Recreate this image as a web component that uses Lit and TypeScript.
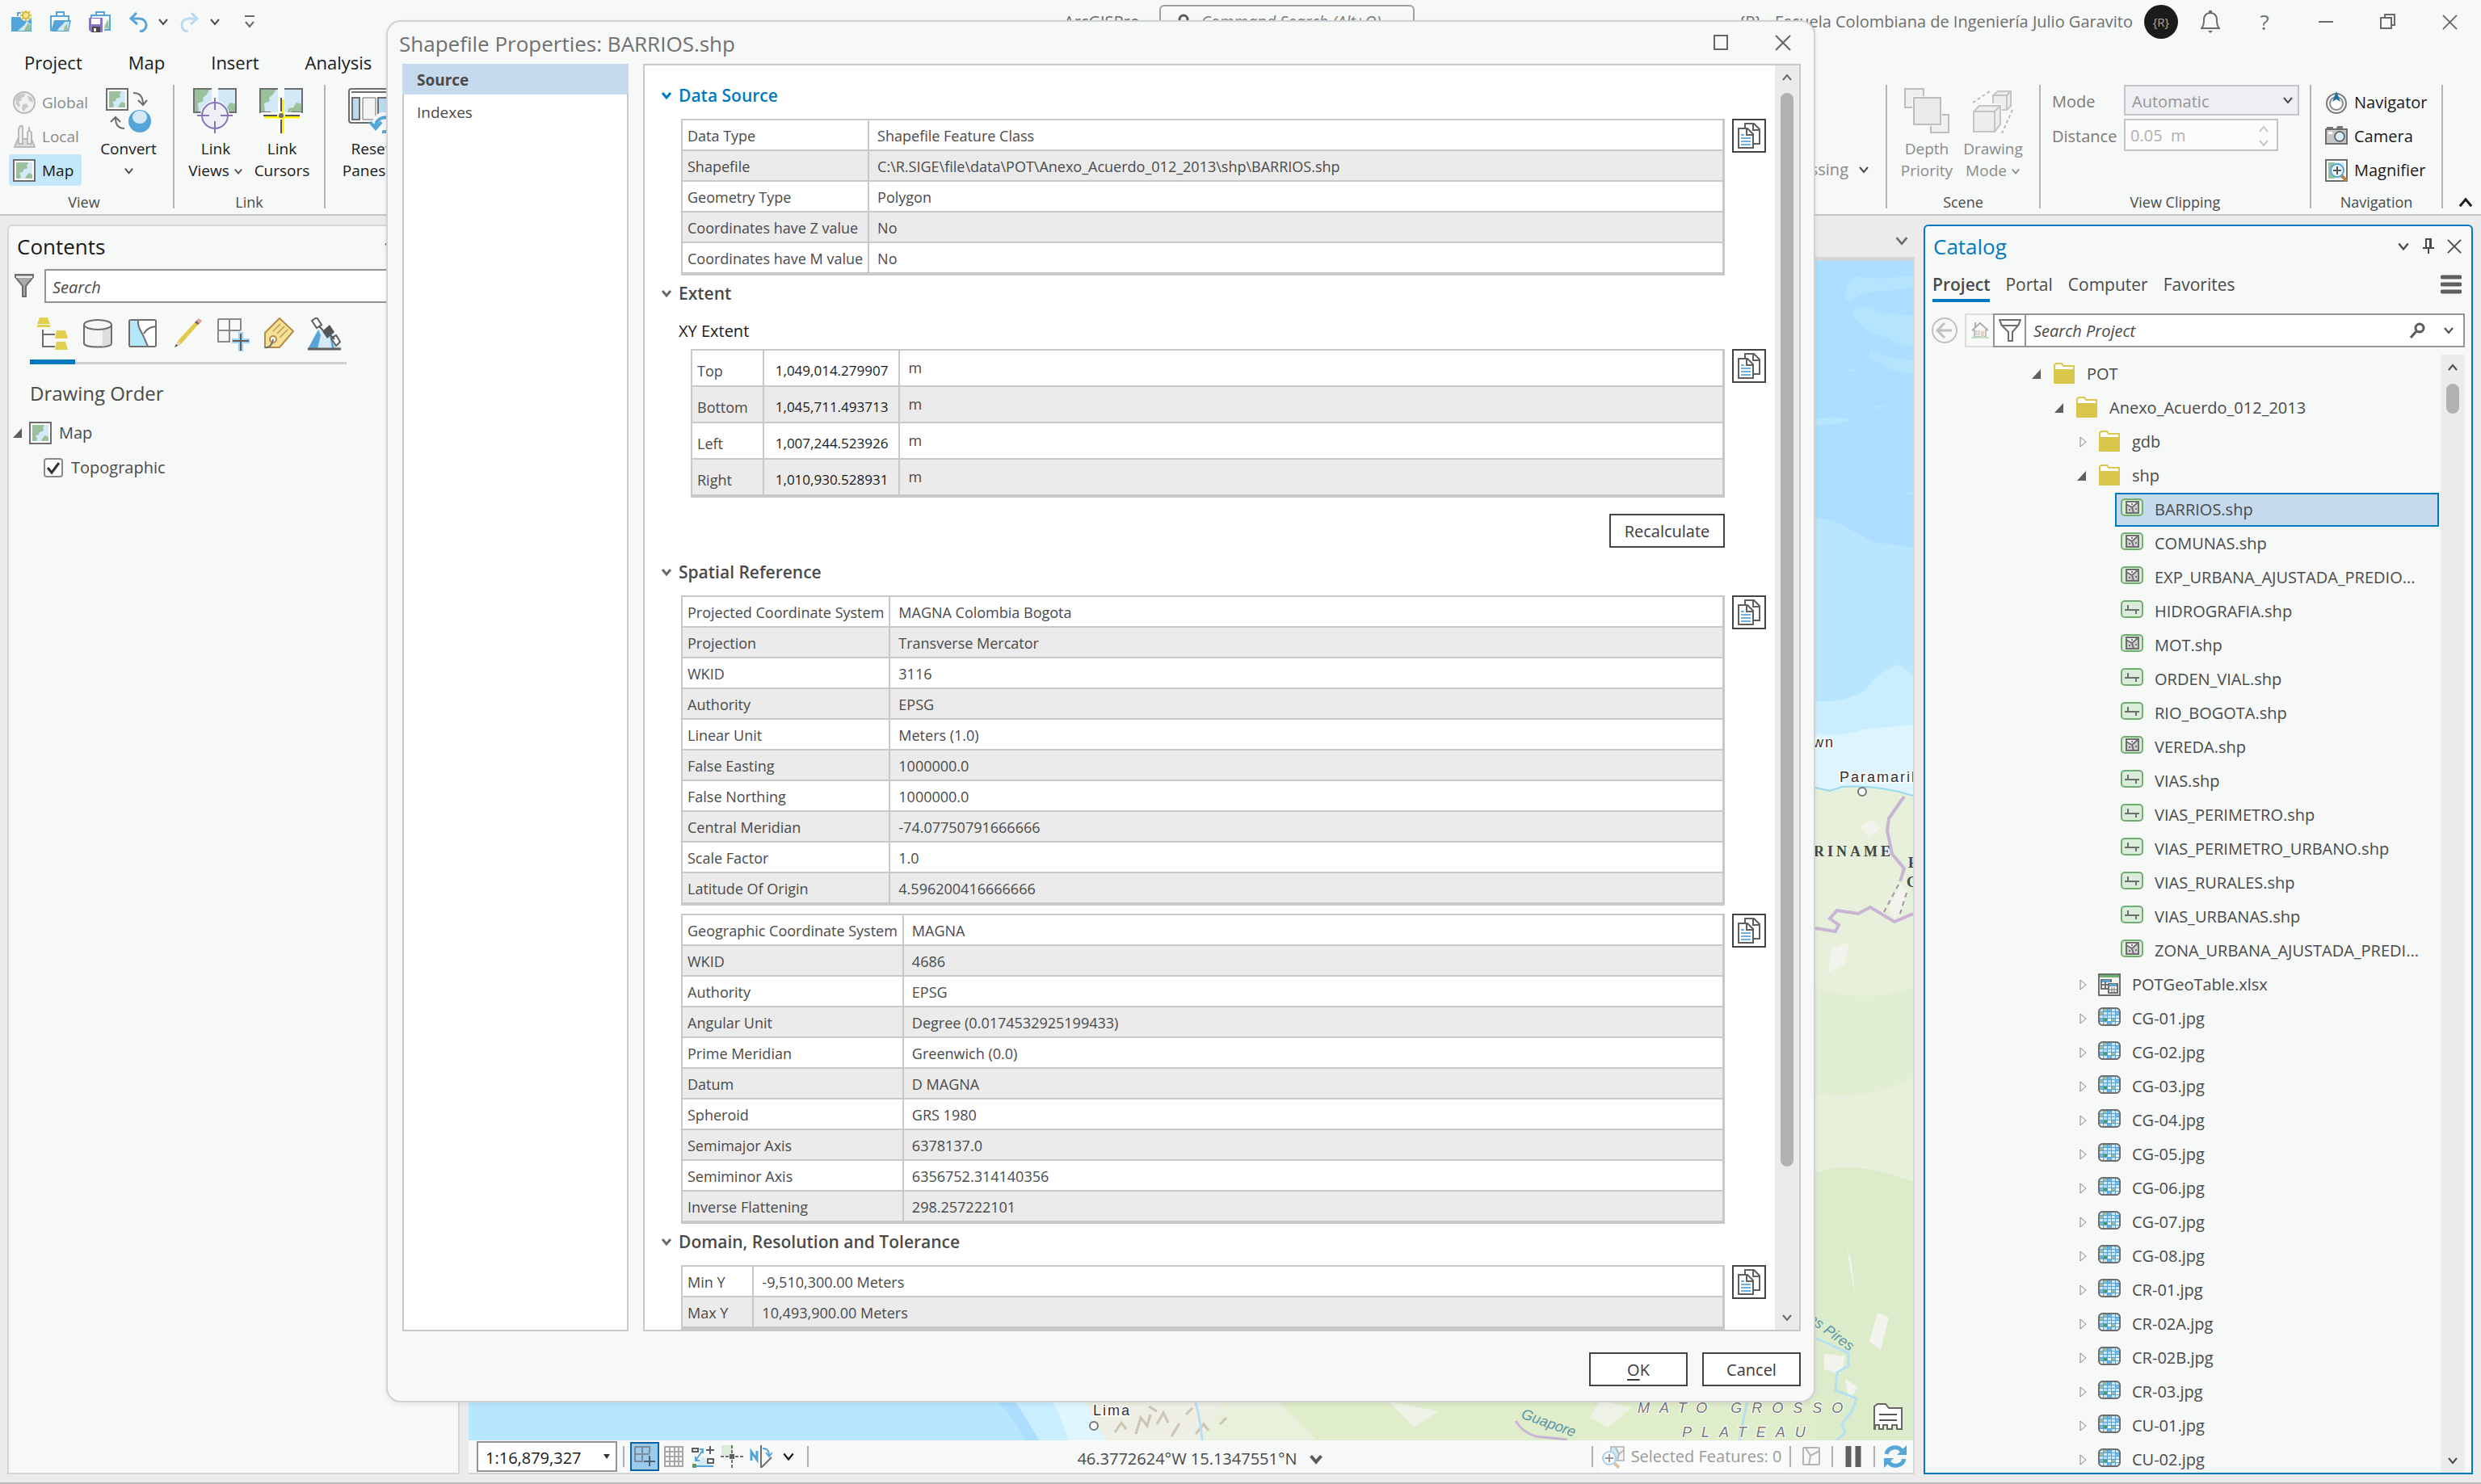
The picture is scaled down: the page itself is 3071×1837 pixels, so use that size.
import { LitElement, html, svg, css, type TemplateResult } from "lit";
import { customElement, property, state } from "lit/decorators.js";
import { classMap } from "lit/directives/class-map.js";
import { styleMap } from "lit/directives/style-map.js";

/* ---------- shared styles ---------- */

const shared = css`
  :host {
    font-family: "Open Sans", "Noto Sans", sans-serif;
    color: #4a4a4a;
    font-size: 20px;
    line-height: 28px;
  }
  * {
    box-sizing: border-box;
  }
  button,
  input,
  select {
    font: inherit;
    color: inherit;
    background: none;
    border: 0;
    border-radius: 0;
    margin: 0;
    padding: 0;
  }
  button {
    display: inline-flex;
    align-items: center;
    justify-content: center;
  }
  input::placeholder {
    color: #4a4a4a;
    font-style: italic;
    opacity: 1;
  }
  svg {
    display: block;
    flex: none;
  }
  ul {
    list-style: none;
    margin: 0;
    padding: 0;
  }
  h1,
  h2,
  h3,
  p {
    margin: 0;
    font-weight: 400;
  }
`;

/* ---------- icons ---------- */

const icon = (w: number, h: number, body: unknown, box = `0 0 ${w} ${h}`) =>
  html`<svg width=${w} height=${h} viewBox=${box} fill="none" aria-hidden="true">${body}</svg>`;

const chevron = (dir: "up" | "down", size = 14, color = "#4a4a4a", stroke = 2) =>
  icon(
    size,
    size,
    dir === "down"
      ? svg`<path d="M2 4 L7 10 L12 4" stroke=${color} stroke-width=${stroke}/>`
      : svg`<path d="M2 10 L7 4 L12 10" stroke=${color} stroke-width=${stroke}/>`,
    "0 0 14 14"
  );

const cross = (size = 20, color = "#555") =>
  icon(size, size, svg`<path d="M1 1 L19 19 M19 1 L1 19" stroke=${color} stroke-width="2"/>`, "0 0 20 20");

const pin = icon(14, 20, svg`
  <path d="M4 1 H10 V12 H4 Z" stroke="#4a4a4a" stroke-width="2"/>
  <path d="M8 1 h3 v11 h-3z" fill="#4a4a4a"/>
  <path d="M0 12 H14 M7 12 V19" stroke="#4a4a4a" stroke-width="2"/>`);

const mapGlyph = svg`
  <rect x="1" y="1" width="26" height="26" fill="#fff" stroke="#6e6e6e" stroke-width="2"/>
  <rect x="4" y="4" width="20" height="20" fill="#d3e9f8"/>
  <path d="M4 4 H19 L17 8 L18 11 L13 13 L12 16 L8 17 L10 21 L9 24 H4 Z" fill="#9bc19c"/>
  <path d="M24 19 L20 17 L17 20 L15 24 H24 Z" fill="#9bc19c"/>`;
const mapIcon = icon(28, 28, mapGlyph);

const qaNew = icon(28, 28, svg`
  <path d="M9 7 V3 H17" stroke="#56a5d8" stroke-width="2"/>
  <rect x="1" y="8" width="25" height="18" fill="#56a5d8"/>
  <path d="M9 25 C15 20 19 17 20 13 L25 17 V25 Z" fill="#d3e9f8"/>
  <path d="M17 25 C18 21 20 19 22 15 L25 19 V25 Z" fill="#9bc19c"/>
  <circle cx="19" cy="6" r="7" fill="#f7f9f8"/>
  <path d="M19 -1 V13 M12 6 H26 M14 1 L24 11 M24 1 L14 11" stroke="#dcc64a" stroke-width="2"/>
  <circle cx="19" cy="6" r="4" fill="#f7e9a0" stroke="#d8b93a" stroke-width="2"/>`);

const qaOpen = icon(28, 28, svg`
  <path d="M9 7 V2 H18 V7" stroke="#56a5d8" stroke-width="2"/>
  <path d="M2 25 V7 H24 V13" stroke="#56a5d8" stroke-width="2"/>
  <path d="M2 26 L6 12 H27 L24 26 Z" fill="#56a5d8"/>
  <path d="M10 25 C12 20 17 18 19 14 H25 L23 25 Z" fill="#d3e9f8"/>
  <path d="M18 25 C18 21 20 18 22 16 L23 25 Z" fill="#9bc19c"/>`);

const qaSave = icon(30, 28, svg`
  <path d="M10 6 V2 H20 V6" stroke="#56a5d8" stroke-width="2"/>
  <path d="M4 12 V6 H27 V24 H20" stroke="#56a5d8" stroke-width="2"/>
  <path d="M20 22 C21 17 23 14 25 11 L26 23 Z" fill="#9bc19c"/>
  <path d="M1 9 H18 V27 H4 L1 24 Z" fill="#8c74c4"/>
  <rect x="4" y="10" width="11" height="7" fill="#fff"/>
  <rect x="5" y="20" width="10" height="7" fill="#4a4a4a"/>
  <rect x="7" y="22" width="3" height="4" fill="#fff"/>`);

const undo = (color: string, flip = false) =>
  icon(
    24,
    26,
    svg`<g transform=${flip ? "translate(24 0) scale(-1 1)" : ""}>
      <path d="M10 2 L3 9 L11 16" stroke=${color} stroke-width="3"/>
      <path d="M3 9 H13 C19 9 22 13 22 17 C22 22 18 25 14 25" stroke=${color} stroke-width="3"/></g>`
  );

const customize = icon(14, 18, svg`<path d="M1 2 H13 M2 9 L7 15 L12 9" stroke="#6a6a6a" stroke-width="2"/>`);

const globe = icon(28, 28, svg`
  <circle cx="14" cy="14" r="13" fill="#f1f1f1" stroke="#b9b9b9" stroke-width="2"/>
  <path d="M3 9 C7 3 12 2 15 3 L14 7 L10 8 L11 11 L7 13 L9 17 L8 20 L4 16 Z" fill="#c9c9c9"/>
  <path d="M12 16 L17 15 L19 19 L15 22 L14 26 L11 22 Z M18 5 L24 8 L25 14 L20 12 Z" fill="#c9c9c9"/>`);

const local = icon(28, 28, svg`
  <path d="M2 27 L6 17 H23 L27 27 Z" fill="#ddd" stroke="#b9b9b9" stroke-width="2"/>
  <path d="M7 23 V5 L9 1 H12 V23 Z" fill="#f1f1f1" stroke="#b9b9b9" stroke-width="2"/>
  <path d="M18 23 V9 L20 6 L23 9 V23 Z M20 6 V2" fill="#f1f1f1" stroke="#b9b9b9" stroke-width="2"/>`);

const convert = icon(56, 56, svg`
  <g>${mapGlyph}</g>
  <path d="M34 6 C43 6 46 12 46 20 M40 15 L46 21 L51 15" stroke="#6e6e6e" stroke-width="2"/>
  <path d="M23 50 C16 50 12 46 12 37 M6 42 L12 36 L18 42" stroke="#6e6e6e" stroke-width="2"/>
  <circle cx="42" cy="41" r="14" fill="#56a5d8"/>
  <ellipse cx="42" cy="36" rx="9" ry="8" fill="#d3e9f8"/>`);

const pairGlyph = svg`
  <rect x="1" y="1" width="22" height="29" fill="#d3e9f8"/>
  <path d="M1 1 H21 L17 8 L12 12 L13 16 L6 19 L7 30 H1 Z" fill="#9bc19c"/>
  <path d="M23 1 H1 V30 H14" stroke="#6e6e6e" stroke-width="2"/>
  <rect x="31" y="1" width="22" height="29" fill="#d3e9f8"/>
  <path d="M53 20 L46 18 L42 24 L36 25 L35 30 H53 Z" fill="#9bc19c"/>
  <path d="M31 1 H53 V30 H40" stroke="#6e6e6e" stroke-width="2"/>`;

const linkViews = icon(56, 56, svg`${pairGlyph}
  <circle cx="27" cy="34" r="18" fill="#fff"/>
  <circle cx="27" cy="34" r="16" fill="#f0eef6" stroke="#8577b8" stroke-width="2"/>
  <path d="M27 12 V27 M27 41 V56 M5 34 H20 M34 34 H49" stroke="#8577b8" stroke-width="2"/>`);

const linkCursors = icon(56, 56, svg`${pairGlyph}
  <path d="M27 12 V56 M2 34 H52" stroke="#fff" stroke-width="8"/>
  <path d="M29 14 V56 M6 36 H50" stroke="#fff200" stroke-width="3"/>
  <path d="M27 12 V29 M27 39 V56 M5 34 H22 M32 34 H50" stroke="#555" stroke-width="2"/>
  <circle cx="27" cy="34" r="3" fill="#6e6e6e"/>`);

const resetPanes = icon(56, 56, svg`
  <rect x="1" y="1" width="54" height="42" rx="3" fill="#fff" stroke="#6e6e6e" stroke-width="2"/>
  <path d="M4 5 H52" stroke="#6e6e6e" stroke-width="2"/>
  <rect x="5" y="12" width="9" height="27" fill="#b9daef" stroke="#6e6e6e" stroke-width="2"/>
  <path d="M18 12 H34 V39 H18 Z" fill="#f4f4f4" stroke="#6e6e6e"/>
  <rect x="37" y="12" width="15" height="27" fill="#b9daef" stroke="#6e6e6e" stroke-width="2"/>
  <circle cx="44" cy="44" r="14" fill="#f7f9f8"/>
  <path d="M34 48 C34 38 44 34 52 38 M27 42 L34 50 L41 42 M42 54 C48 55 53 52 55 48" stroke="#56a5d8" stroke-width="4"/>`);

const depth = icon(56, 56, svg`
  <rect x="1" y="1" width="23" height="23" fill="#efefef" stroke="#bdbdbd" stroke-width="2"/>
  <rect x="33" y="33" width="22" height="22" fill="#efefef" stroke="#bdbdbd" stroke-width="2"/>
  <rect x="10" y="10" width="37" height="37" fill="#f7f9f8"/>
  <rect x="12" y="12" width="33" height="33" fill="#ebebeb" stroke="#bdbdbd" stroke-width="2"/>`);

const drawing = icon(52, 56, svg`
  <path d="M26 9 L32 4 H48 V22 L43 27 H26 Z" fill="#eee" stroke="#c4c4c4" stroke-width="2"/>
  <path d="M26 9 H43 L48 4 M43 9 V27" stroke="#c4c4c4" stroke-width="2"/>
  <path d="M0 27 L8 19 H37 V46 L29 55 H0 Z" fill="#f7f9f8"/>
  <path d="M2 29 L9 22 H35 V45 L28 54 H2 Z" fill="#ededed" stroke="#c4c4c4" stroke-width="2"/>
  <path d="M2 29 H28 L35 22 M28 29 V54" stroke="#c4c4c4" stroke-width="2"/>
  <path d="M1 18 L22 4 M50 27 L37 56" stroke="#bdbdbd" stroke-width="2" stroke-dasharray="4 3"/>`);

const navigator = icon(28, 28, svg`
  <circle cx="14" cy="15" r="12" stroke="#7a7a7a" stroke-width="2"/>
  <circle cx="14" cy="15" r="8" stroke="#8a8a8a" stroke-width="2" fill="#fff"/>
  <path d="M14 0 L19 13 L14 10 L9 13 Z" fill="#1f6ea8"/>`);

const camera = icon(28, 28, svg`
  <path d="M3 5 V3 H9 V5 M14 5 L16 2 H21 V5" fill="#777" stroke="#777" stroke-width="2"/>
  <rect x="1" y="5" width="26" height="18" fill="#c8c8c8" stroke="#6e6e6e" stroke-width="2"/>
  <rect x="4" y="8" width="5" height="3" fill="#fff"/>
  <circle cx="18" cy="14" r="6" fill="#d9eefa" stroke="#6e6e6e" stroke-width="2"/>`);

const magnifier = icon(28, 28, svg`
  <rect x="1" y="1" width="26" height="26" fill="#fff" stroke="#6e6e6e" stroke-width="2"/>
  <path d="M4 4 H24 V24 H4 Z" fill="#d3e9f8"/>
  <path d="M4 4 H12 L10 12 L12 24 H4 Z" fill="#9bc19c"/>
  <path d="M20 20 L27 27" stroke="#c08545" stroke-width="4"/>
  <circle cx="15" cy="14" r="8" fill="#eef7fc" stroke="#56a5d8" stroke-width="2"/>
  <path d="M10 14 H20 M15 9 V19" stroke="#555" stroke-width="2"/>`);

const bell = icon(24, 28, svg`
  <path d="M1 22 C4 19 4 16 4 12 C4 6 7 3 12 3 C17 3 20 6 20 12 C20 16 20 19 23 22 Z" stroke="#6a6a6a" stroke-width="2"/>
  <path d="M11 3 V0 H13 V3" stroke="#6a6a6a" stroke-width="2"/>
  <path d="M9 25 H15 L12 28 Z" fill="#6a6a6a"/>`);

const restore = icon(20, 20, svg`
  <path d="M6 5 V1 H18 V14 H14" stroke="#6a6a6a" stroke-width="2"/>
  <rect x="1" y="5" width="13" height="13" stroke="#6a6a6a" stroke-width="2"/>`);

const funnelFill = icon(24, 30, svg`
  <path d="M1 1 H23 V4 L14 15 V28 H10 V15 L1 4 Z" fill="#a9a9a9" stroke="#6e6e6e" stroke-width="2"/>
  <path d="M2 4 H22" stroke="#f2f2f2" stroke-width="2"/>`);

const funnelLine = icon(28, 30, svg`
  <path d="M1 2 H27 L24 9 H4 Z M4 9 H24 L17 17 V28 H12 V17 Z" stroke="#6e6e6e" stroke-width="2" fill="#fafafa"/>`);

const searchGlass = icon(20, 20, svg`
  <circle cx="12" cy="7" r="5" stroke="#5a5a5a" stroke-width="3"/>
  <path d="M8 11 L1 19" stroke="#5a5a5a" stroke-width="3"/>`);

const back = icon(34, 34, svg`
  <circle cx="17" cy="17" r="15" stroke="#c0c0c0" stroke-width="2"/>
  <path d="M26 17 H9 M17 8 L8 17 L17 26" stroke="#c0c0c0" stroke-width="3"/>`);

const home = icon(22, 22, svg`
  <path d="M4 10 V19 H18 V10" fill="#f4f4f4" stroke="#bdbdbd" stroke-width="2"/>
  <path d="M1 11 L11 2 L21 11 M5 7 V1" stroke="#adadad" stroke-width="2"/>
  <rect x="12" y="12" width="4" height="7" fill="#e8d3bd"/>
  <rect x="6" y="12" width="4" height="4" stroke="#bdbdbd"/>
  <path d="M0 20 H22" stroke="#c3e2c3" stroke-width="2"/>`);

const menuBars = icon(26, 26, svg`<path d="M2 4 H24 M2 13 H24 M2 22 H24" stroke="#5f5f5f" stroke-width="5" stroke-linecap="round"/>`);

const folder = icon(28, 28, svg`
  <path d="M2 9 V3 L4 1 H11 L13 4 H26 V9" fill="#fff" stroke="#d9c64b" stroke-width="2"/>
  <rect x="1" y="8" width="26" height="18" fill="#d9c64b"/>`);

const shpFrame = svg`<rect x="1" y="1" width="26" height="20" rx="4" fill="#daedda" stroke="#6fb06f" stroke-width="2"/>`;
const polygonShp = icon(28, 28, svg`${shpFrame}
  <rect x="7" y="4" width="15" height="14" fill="#cfcfcf"/>
  <path d="M7 4 H21 L14 11 L7 7 Z" fill="#fff"/>
  <path d="M7 7 L14 11 L22 4 M14 11 L16 18" stroke="#6e6e6e" stroke-width="2"/>
  <rect x="7" y="4" width="15" height="14" stroke="#6e6e6e" stroke-width="2"/>
  <path d="M13 7 h2 M10 14 h2 M18 13 h2" stroke="#6e6e6e" stroke-width="2"/>`);
const lineShp = icon(28, 28, svg`${shpFrame}
  <path d="M5 12 H23 M9 6 V12 M19 12 V17" stroke="#6e6e6e" stroke-width="2"/>`);

const xlsx = icon(28, 28, svg`
  <rect x="1" y="1" width="26" height="26" fill="#f4f4f4" stroke="#6e6e6e" stroke-width="2"/>
  <rect x="2" y="2" width="24" height="3" fill="#6fb06f"/>
  <rect x="4" y="8" width="12" height="11" fill="#fff" stroke="#6e6e6e" stroke-width="2"/>
  <rect x="5" y="8" width="10" height="3" fill="#56a5d8"/>
  <path d="M5 14 H12 M9 10 V19" stroke="#6e6e6e" stroke-width="2"/>
  <rect x="12" y="11" width="14" height="14" fill="#f4f4f4"/>
  <rect x="13" y="13" width="11" height="11" fill="#fff" stroke="#6e6e6e" stroke-width="2"/>
  <rect x="14" y="13" width="9" height="3" fill="#56a5d8"/>
  <path d="M14 20 H23 M17 17 V23 M20 17 V23" stroke="#6e6e6e"/>`);

const rasterCells = [
  "#cfe6f6 #9bc19c #6db4e4 #cfe6f6 #cfe6f6",
  "#9bc19c #cfe6f6 #b9daef #cfe6f6 #7fbde6",
  "#cfe6f6 #b9daef #cfe6f6 #cfe6f6 #cfe6f6",
  "#6db4e4 #4f9a55 #fff #9bc19c #fff",
  "#fff #cfe6f6 #6db4e4 #cfe6f6 #eaf5fc",
];
const raster = icon(28, 28, svg`
  <rect x="1" y="1" width="26" height="21" rx="5" fill="#56a5d8" stroke="#6e6e6e" stroke-width="2"/>
  ${rasterCells.map((row, r) => row.split(" ").map((c, i) => svg`<rect x=${2 + i * 5} y=${2 + r * 4} width="4" height="3" fill=${c}/>`))}
  <rect x="1" y="1" width="26" height="21" rx="5" stroke="#6e6e6e" stroke-width="2"/>`);

const openArrow = icon(11, 12, svg`<path d="M11 0 V12 H0 Z" fill="#5f5f5f"/>`);
const closedArrow = icon(10, 14, svg`<path d="M1 1 V13 L8 7 Z" stroke="#808080" fill="#fff"/>`);

const copyIcon = icon(28, 32, svg`
  <path d="M9 7 V1 H20 L27 8 V26 H20" fill="#fff" stroke="#5f5f5f" stroke-width="2"/>
  <path d="M19 2 V9 H26" stroke="#5f5f5f" stroke-width="2"/>
  <path d="M1 7 H12 L19 14 V31 H1 Z" fill="#fff" stroke="#5f5f5f" stroke-width="2"/>
  <path d="M11 8 V15 H18" stroke="#5f5f5f" stroke-width="2"/>
  <path d="M4 15 H8 M4 19 H16 M4 23 H16 M4 27 H16" stroke="#6db1e0" stroke-width="2"/>`);

/* toolbar of the contents pane */
const contentTools: [string, TemplateResult][] = [
  ["List By Drawing Order", icon(42, 42, svg`
    <path d="M5 0 H15 L18 8 H2 Z M2 9 H18 V12 H2 Z" fill="#e3cf4e"/>
    <path d="M26 16 H37 L40 26 H24 Z M26 30 H37 L40 40 H24 Z" fill="#e3cf4e"/>
    <path d="M9 15 V36 H24 M9 21 H24" stroke="#6e6e6e" stroke-width="2"/>`)],
  ["List By Data Source", icon(42, 42, svg`
    <path d="M4 9 V32 C4 38 38 38 38 32 V9 Z" fill="#f4f4f4" stroke="#6e6e6e" stroke-width="2"/>
    <path d="M27 14 L37 11 V33 L27 36 Z" fill="#dcdcdc"/>
    <ellipse cx="21" cy="9" rx="17" ry="6" fill="#f7f7f7" stroke="#6e6e6e" stroke-width="2"/>`)],
  ["List By Selection", icon(42, 42, svg`
    <rect x="4" y="3" width="33" height="33" rx="2" fill="#fff" stroke="#6e6e6e" stroke-width="2"/>
    <path d="M5 4 H15 C14 14 20 18 22 24 C24 29 25 32 27 35 H5 Z" fill="#b3e7fa"/>
    <path d="M15 4 C14 14 20 18 22 24 C24 29 25 32 27 35 M22 20 C26 13 31 12 37 11" stroke="#6e6e6e" stroke-width="2"/>`)],
  ["List By Editing", icon(42, 42, svg`
    <path d="M8 29 L30 5 L34 8 L12 33 Z" fill="#e0cb4c"/>
    <path d="M8 29 L4 37 L12 33 Z" fill="#e8cfa8"/><path d="M4 37 l2 -4 l2 2z" fill="#444"/>
    <path d="M29 6 L32 3 L35 7 L33 9 Z" fill="#666"/><path d="M31 4 L34 1 L38 4 L35 8 Z" fill="#e5a09a"/>`)],
  ["List By Snapping", icon(42, 42, svg`
    <path d="M2 2 H30 V16 M2 2 V30 H16 V2 M2 16 H30" stroke="#8a8a8a" stroke-width="2"/>
    <path d="M30 18 V42 M19 29 H41" stroke="#9fd2f3" stroke-width="6"/>
    <path d="M30 20 V41 M20 29 H40" stroke="#5f5f5f" stroke-width="2"/>`)],
  ["List By Labeling", icon(42, 42, svg`
    <path d="M4 19 L22 1 L39 17 L22 37 H4 Z" fill="#f4e29b" stroke="#b98a44" stroke-width="2"/>
    <path d="M14 17 L23 8 M19 20 L28 11 M22 25 L32 15" stroke="#c9ae62" stroke-width="2"/>
    <circle cx="14" cy="27" r="4" fill="#fff" stroke="#b98a44" stroke-width="2"/>
    <path d="M14 27 C13 34 9 38 4 37" stroke="#6e6e6e" stroke-width="2"/>`)],
  ["List By Perspective Imagery", icon(42, 42, svg`
    <path d="M14 15 H31 L42 39 H1 Z" fill="#d3e9f8"/>
    <path d="M14 15 L1 39 H13 L17 22 Z" fill="#56a5d8"/>
    <path d="M28 22 L31 39 H41 L34 24 Z" fill="#56a5d8"/>
    <path d="M31 26 l8 3 l3 10 h-8z" fill="#d9ead2"/>
    <path d="M1 39 H42" stroke="#5f5f5f" stroke-width="3"/>
    <path d="M6 4 L12 0 L18 9 L12 13 Z M30 26 L36 22 L41 30 L36 35 Z" fill="#fff" stroke="#5f5f5f" stroke-width="2"/>
    <path d="M19 17 L28 9 L34 18 L25 26 Z" fill="#555"/>
    <path d="M15 11 L20 16 M29 22 L34 27" stroke="#555" stroke-width="2"/>`)],
];

/* ---------- pane header ---------- */

@customElement("pane-header")
class PaneHeader extends LitElement {
  @property() heading = "";
  @property({ type: Boolean }) active = false;
  static styles = [
    shared,
    css`
      :host {
        display: block;
      }
      .bar {
        display: flex;
        align-items: center;
        height: 50px;
        padding: 0 12px 0 10px;
      }
      .title {
        flex: 1;
        font-size: 26px;
        line-height: 36px;
        color: #1a1a1a;
      }
      .title.active {
        color: #0079c1;
      }
      .tools {
        display: flex;
        align-items: center;
        gap: 16px;
      }
    `,
  ];
  render() {
    return html`<div class="bar">
      <h2 class=${classMap({ title: true, active: this.active })}>${this.heading}</h2>
      <div class="tools">
        <button aria-label="Menu">${chevron("down", 16)}</button>
        <button aria-label="Auto hide">${pin}</button>
        <button aria-label="Close">${cross(18, "#4a4a4a")}</button>
      </div>
    </div>`;
  }
}

/* ---------- title bar and ribbon ---------- */

@customElement("app-ribbon")
class AppRibbon extends LitElement {
  static styles = [
    shared,
    css`
      :host {
        display: block;
        background: #f7f9f8;
        border-bottom: 2px solid #c4c4c4;
      }
      .titlebar {
        display: flex;
        align-items: center;
        height: 54px;
        padding-left: 13px;
      }
      .quick {
        display: flex;
        align-items: center;
        gap: 20px;
      }
      .pair {
        display: flex;
        align-items: center;
        gap: 12px;
      }
      .pair + .pair {
        margin-left: -6px;
      }
      .quick > button:last-child {
        margin-left: 9px;
      }
      .center {
        flex: 1;
        display: flex;
        align-items: center;
        justify-content: flex-end;
        gap: 24px;
        padding-right: 402px;
        color: #6a6a6a;
      }
      .command {
        display: flex;
        align-items: center;
        gap: 14px;
        width: 316px;
        height: 42px;
        padding: 0 18px 0 16px;
        border: 2px solid #a0a0a0;
        border-radius: 6px;
      }
      .command input {
        flex: 1;
        min-width: 0;
      }
      .command input::placeholder {
        color: #7a7a7a;
      }
      .account {
        display: flex;
        align-items: center;
        color: #6e6e6e;
      }
      .avatar {
        width: 42px;
        height: 42px;
        margin: 0 28px 0 14px;
        border-radius: 50%;
        background: #1b1b1b;
        color: #a8a8a8;
        font-size: 15px;
      }
      .help {
        width: 44px;
        margin: 0 15px 0 33px;
        font-size: 26px;
      }
      .win {
        width: 77px;
        height: 50px;
      }
      .tabs {
        display: flex;
        gap: 57px;
        height: 51px;
        padding: 0 0 5px 30px;
        align-items: center;
        font-size: 22px;
        color: #1a1a1a;
      }
      .groups {
        display: flex;
        height: 160px;
        padding-bottom: 7px;
      }
      .group {
        display: flex;
        flex-direction: column;
        border-right: 2px solid #b5b5b5;
      }
      .body {
        flex: 1;
        display: flex;
        align-items: flex-start;
      }
      .label {
        font-size: 18px;
        line-height: 24px;
        height: 24px;
        margin-bottom: -4px;
        text-align: center;
      }
      .view {
        width: 216px;
      }
      .view .body {
        padding-left: 11px;
      }
      .view .label {
        padding-right: 6px;
      }
      .link {
        width: 187px;
      }
      .link .body {
        padding-left: 10px;
      }
      .windows {
        flex: 1;
        padding-left: 4px;
      }
      .windows .body {
        justify-content: space-between;
      }
      .scene {
        width: 190px;
      }
      .scene .body {
        padding-left: 8px;
      }
      .clipping {
        width: 335px;
      }
      .navigation {
        width: 163px;
      }
      .navigation .body {
        padding-left: 17px;
      }
      .tail {
        width: 47px;
        align-self: flex-end;
        padding-left: 18px;
        margin-bottom: -10px;
      }
      .big {
        flex-direction: column;
        justify-content: flex-start;
        font-size: 19px;
        line-height: 27px;
        color: #1a1a1a;
        padding-top: 4px;
        width: 82px;
        gap: 6px;
      }
      .big.wide {
        width: 104px;
      }
      .big.off,
      .row.off,
      .off {
        color: #8a8a8a;
      }
      .cap {
        display: block;
        text-align: center;
        white-space: nowrap;
      }
      .cap svg {
        display: inline-block;
      }
      .rows {
        display: flex;
        flex-direction: column;
        gap: 3px;
        padding-top: 2px;
      }
      .row {
        justify-content: flex-start;
        gap: 8px;
        height: 39px;
        padding: 0 5px;
        border-radius: 4px;
        color: #1a1a1a;
      }
      .rows.small {
        width: 90px;
        margin-right: 17px;
        font-size: 19px;
      }
      .row.on {
        background: #c3e8fa;
      }
      .navigation .row {
        padding: 0;
      }
      .geo {
        margin: 91px 20px 0 auto;
        gap: 12px;
      }
      .fields {
        display: grid;
        grid-template-columns: 89px 217px;
        row-gap: 4px;
        padding-left: 14px;
        color: #7a7a7a;
        align-items: center;
      }
      .fields label {
        padding-top: 4px;
      }
      .combo {
        height: 38px;
        display: flex;
        align-items: center;
        border: 2px solid #c4c4c8;
        background: #eeeff3;
      }
      .combo select {
        appearance: none;
        flex: 1;
        height: 34px;
        padding: 3px 0 0 8px;
        color: #959595;
        opacity: 1;
      }
      .combo svg {
        margin-right: 5px;
      }
      .spin {
        display: flex;
        width: 191px;
        height: 40px;
        border: 2px solid #c4c4c4;
        background: #fcfcfc;
      }
      .spin input {
        flex: 1;
        min-width: 0;
        padding: 2px 0 0 6px;
        color: #b0b0b0;
      }
      .spin span {
        display: flex;
        flex-direction: column;
        justify-content: space-around;
        padding: 2px 9px 0 0;
      }
    `,
  ];
  render() {
    return html`
      <header class="titlebar">
        <div class="quick">
          <button aria-label="New project">${qaNew}</button>
          <button aria-label="Open project">${qaOpen}</button>
          <button aria-label="Save project">${qaSave}</button>
          <span class="pair"><button aria-label="Undo">${undo("#56a5d8")}</button><button aria-label="Undo list">${chevron("down")}</button></span>
          <span class="pair"><button aria-label="Redo">${undo("#b9daef", true)}</button><button aria-label="Redo list">${chevron("down")}</button></span>
          <button aria-label="Customize">${customize}</button>
        </div>
        <div class="center">
          <span>ArcGISPro</span>
          <label class="command">${searchGlass}<input aria-label="Command search" placeholder="Command Search (Alt+Q)" /></label>
        </div>
        <div class="account">
          <span>{R} - Escuela Colombiana de Ingeniería Julio Garavito</span>
          <button class="avatar" aria-label="Account">{R}</button>
          <button aria-label="Notifications">${bell}</button>
          <button class="help" aria-label="Help">?</button>
          <button class="win" aria-label="Minimize">${icon(20, 20, svg`<path d="M1 10 H19" stroke="#6a6a6a" stroke-width="2"/>`)}</button>
          <button class="win" aria-label="Restore">${restore}</button>
          <button class="win" aria-label="Close">${cross(19, "#6a6a6a")}</button>
        </div>
      </header>
      <nav class="tabs">
        <button>Project</button><button>Map</button><button>Insert</button><button>Analysis</button>
      </nav>
      <div class="groups">
        <section class="group view">
          <div class="body">
            <div class="rows small">
              <button class="row off">${globe}Global</button>
              <button class="row off">${local}Local</button>
              <button class="row on">${mapIcon}Map</button>
            </div>
            <button class="big">${convert}<span class="cap">Convert<br />${chevron("down", 13)}</span></button>
          </div>
          <div class="label">View</div>
        </section>
        <section class="group link">
          <div class="body">
            <button class="big">${linkViews}<span class="cap">Link<br />Views ${chevron("down", 12)}</span></button>
            <button class="big">${linkCursors}<span class="cap">Link<br />Cursors</span></button>
          </div>
          <div class="label">Link</div>
        </section>
        <section class="group windows">
          <div class="body">
            <button class="big wide">${resetPanes}<span class="cap">Reset<br />Panes ${chevron("down", 12)}</span></button>
            <button class="geo off">Geoprocessing${chevron("down")}</button>
          </div>
        </section>
        <section class="group scene">
          <div class="body">
            <button class="big off">${depth}<span class="cap">Depth<br />Priority</span></button>
            <button class="big off">${drawing}<span class="cap">Drawing<br />Mode ${chevron("down", 12, "#8a8a8a")}</span></button>
          </div>
          <div class="label">Scene</div>
        </section>
        <section class="group clipping">
          <div class="body">
            <div class="fields">
              <label for="mode">Mode</label>
              <div class="combo"><select id="mode" disabled><option>Automatic</option></select>${chevron("down")}</div>
              <label for="distance">Distance</label>
              <div class="spin"><input id="distance" value="0.05  m" disabled /><span>${chevron("up", 14, "#c8c8c8")}${chevron("down", 14, "#c8c8c8")}</span></div>
            </div>
          </div>
          <div class="label">View Clipping</div>
        </section>
        <section class="group navigation">
          <div class="body">
            <div class="rows">
              <button class="row">${navigator}Navigator</button>
              <button class="row">${camera}Camera</button>
              <button class="row">${magnifier}Magnifier</button>
            </div>
          </div>
          <div class="label">Navigation</div>
        </section>
        <div class="tail"><button aria-label="Collapse the ribbon">${chevron("up", 20, "#1a1a1a")}</button></div>
      </div>
    `;
  }
}

/* ---------- contents pane ---------- */

@customElement("contents-pane")
class ContentsPane extends LitElement {
  static styles = [
    shared,
    css`
      :host {
        display: block;
        background: #f7f9f8;
        border: 2px solid #d3d5d8;
        border-radius: 6px 6px 0 0;
      }
      .search {
        display: flex;
        align-items: center;
        gap: 13px;
        padding: 3px 8px 0 7px;
      }
      .search input {
        flex: 1;
        height: 42px;
        padding: 2px 8px 0;
        border: 2px solid #949494;
        background: #fff;
      }
      .tools {
        display: flex;
        width: 392px;
        margin: 16px 0 0 26px;
        border-bottom: 3px solid #cfcfcf;
      }
      .tool {
        width: 56px;
        height: 60px;
        padding-bottom: 8px;
        margin-bottom: -3px;
        border-bottom: 6px solid transparent;
      }
      .tool.on {
        border-color: #0079c1;
      }
      .order {
        margin: 18px 0 0 26px;
        font-size: 24px;
        line-height: 36px;
      }
      .node {
        display: flex;
        align-items: center;
        height: 43px;
      }
      .root {
        margin-top: 9px;
        padding-left: 5px;
        gap: 9px;
      }
      .leaf {
        padding-left: 43px;
        gap: 10px;
      }
      .leaf input {
        appearance: none;
        width: 24px;
        height: 24px;
        border: 2px solid #8a8a8a;
        border-radius: 4px;
        background: #fff;
      }
      .box {
        display: grid;
      }
      .box > * {
        grid-area: 1 / 1;
      }
      .box svg {
        pointer-events: none;
        place-self: center;
      }
    `,
  ];
  @state() private tool = 0;
  render() {
    return html`
      <pane-header heading="Contents"></pane-header>
      <div class="search">${funnelFill}<input aria-label="Search contents" placeholder="Search" /></div>
      <div class="tools">
        ${contentTools.map(
          ([name, glyph], i) =>
            html`<button class=${classMap({ tool: true, on: i === this.tool })} aria-label=${name} @click=${() => (this.tool = i)}>${glyph}</button>`
        )}
      </div>
      <h3 class="order">Drawing Order</h3>
      <ul>
        <li class="node root">${openArrow}${mapIcon}Map</li>
        <li class="node leaf">
          <span class="box"><input id="topo" type="checkbox" checked />${icon(18, 18, svg`<path d="M2 9 L7 15 L16 3" stroke="#333" stroke-width="3"/>`)}</span>
          <label for="topo">Topographic</label>
        </li>
      </ul>
    `;
  }
}

/* ---------- map view ---------- */

@customElement("map-view")
class MapView extends LitElement {
  static styles = [
    shared,
    css`
      :host {
        display: flex;
        flex-direction: column;
        min-width: 0;
        min-height: 0;
      }
      .strip {
        height: 51px;
        display: flex;
        align-items: center;
        justify-content: flex-end;
        padding: 10px 7px 0 0;
      }
      .frame {
        flex: 1;
        min-height: 0;
        display: flex;
        flex-direction: column;
        border: 2px solid #d3d5d8;
        border-width: 5px 2px 2px 0;
        background: #f7f9f8;
      }
      .canvas {
        position: relative;
        flex: 1;
        min-height: 0;
      }
      .canvas > svg {
        width: 100%;
        height: 100%;
        position: absolute;
        inset: 0;
      }
      .sans {
        font-family: "Liberation Sans", Arial, sans-serif;
      }
      .serif {
        font-family: "Liberation Serif", serif;
        font-weight: 700;
      }
      .status {
        display: flex;
        align-items: center;
        height: 40px;
        padding: 0 8px 0 10px;
      }
      .scale {
        display: flex;
        align-items: center;
        width: 174px;
        height: 38px;
        padding-right: 7px;
        border: 2px solid #949494;
        background: #fff;
        color: #1a1a1a;
      }
      .scale select {
        appearance: none;
        flex: 1;
        height: 34px;
        padding: 3px 0 0 9px;
      }
      .bar {
        width: 2px;
        height: 26px;
        background: #b0b0b0;
        margin: 0 7px;
      }
      .tool {
        width: 36px;
        height: 36px;
      }
      .tool.on {
        background: #9ccaec;
        border: 2px solid #0b62a0;
      }
      .tool.more {
        width: 32px;
      }
      .coords {
        flex: 1;
        display: flex;
        justify-content: center;
        align-items: center;
        gap: 14px;
        padding-top: 6px;
      }
      .selected {
        width: 229px;
        height: 38px;
        gap: 7px;
        background: #fafbfb;
        color: #9a9a9a;
      }
      .refresh {
        margin-left: 4px;
      }
    `,
  ];
  render() {
    return html`
      <div class="strip"><button aria-label="Open views">${chevron("down", 18, "#6a6a6a")}</button></div>
      <div class="frame">
        <div class="canvas">${this.map()}</div>
        ${this.status()}
      </div>
    `;
  }
  private map() {
    return html`<svg viewBox="0 0 1788 1460" preserveAspectRatio="xMaxYMax slice" role="img" aria-label="Topographic map">
      <rect width="1788" height="1460" fill="#b8e6ff" />
      <path d="M1000 0 H1788 V355 L1740 348 L1690 322 L1640 312 H1000 Z" fill="#abdeff" />
      <g fill="#b8e6ff" opacity="0.8">
        <path d="M1708 28 q8 -12 16 -8 l24 2 l40 -4 v14 l-20 4 l-30 2 q-20 4 -28 12 q-12 -4 -2 -22z" />
        <path d="M1712 62 l16 -6 l20 8 l40 4 v36 q-14 4 -30 -8 l-18 -6 q-20 -8 -28 -28z" />
        <path d="M1736 110 l18 8 l34 6 v16 l-24 -4 l-30 -16z" />
        <path d="M1667 196 l20 -3 l24 3 l-16 6 l-28 2z M1700 136 l20 -4 l-6 6z M1740 180 l14 -2 l-8 6z M1778 288 l10 -2 v4z" />
      </g>
      <path d="M1667 545 Q1700 548 1728 532 Q1745 508 1770 500 L1788 512 V700 H1667 Z" fill="#c9eeff" />
      <path d="M1667 585 Q1700 590 1725 580 L1788 574 V700 H1667 Z" fill="#def5ff" />
      <path d="M1667 652 L1685 656 L1700 651 Q1745 648 1788 662 V1460 H1667 Z" fill="#e6f0da" />
      <path d="M1667 652 L1685 656 L1700 651 Q1745 648 1788 662" stroke="#9ad7f0" stroke-width="2" fill="none" />
      <g fill="#dcebc9">
        <path d="M1667 900 q60 20 121 0 v110 q-50 30 -121 20z" opacity="0.5" />
        <path d="M1667 1130 q40 -20 121 10 v90 q-60 20 -121 0z" />
        <path d="M1667 1220 q50 30 121 0 v240 h-121z" />
      </g>
      <g fill="#f2f3ec">
        <path d="M1722 700 l16 -8 l10 10 l-14 12z M1686 852 l24 -10 l-8 30 l-18 8z M1758 800 l14 -28 l10 8 l-16 36z" />
        <path d="M1744 1302 l14 6 l-10 40 l-14 -10z M1678 1352 l26 4 l-6 22 l-20 -6z M1704 1384 l16 10 l-12 16z M1706 1220 l6 20 l4 38 l-6 -30z" />
      </g>
      <path d="M1777 663 L1758 690 L1756 705 L1762 734 L1777 752 L1772 768" stroke="#c9b4d3" stroke-width="4" fill="none" />
      <path d="M1770 772 L1752 806 M1780 782 L1772 808" stroke="#a394ac" stroke-width="2" stroke-dasharray="6 5" fill="none" />
      <path d="M1667 826 L1692 830 L1696 822 L1685 814 L1694 804 L1720 808 L1735 800 L1765 818 L1788 808" stroke="#c9b4d3" stroke-width="4" fill="none" />
      <path d="M1667 1333 L1708 1352 L1708 1368 L1694 1376 L1692 1398 L1718 1408 L1712 1424 L1700 1440 L1704 1450 L1694 1460" stroke="#b5e0f2" stroke-width="3" fill="none" />

      <path d="M640 1400 Q672 1425 690 1460 H760 L770 1400 Z" fill="#abdeff" />
      <path d="M668 1400 Q690 1430 706 1460 H800 V1400 Z" fill="#c9eeff" />
      <path d="M715 1400 Q735 1430 742 1460 H800 V1400 Z" fill="#e0f6ff" />
      <path d="M750 1400 L768 1418 L776 1440 L790 1460 H1667 V1400 Z" fill="#e9f0dc" />
      <path d="M762 1400 L772 1430 L790 1460 H905 L940 1400 Z" fill="#eeeee4" />
      <g stroke="#c9c6b4" stroke-width="3" fill="none">
        <path d="M800 1450 l8 -12 l6 8 M826 1452 l6 -20 l8 10 l4 -14 M852 1440 l8 -14 l6 12 M870 1455 l10 -16 M842 1418 l10 6 M888 1428 l8 -8 M900 1452 l10 -12 l6 8 M930 1440 l8 -8" />
      </g>
      <path d="M896 1400 q10 30 12 60" stroke="#b5e0f2" stroke-width="3" fill="none" />
      <path d="M990 1400 h680 v60 h-620 z" fill="#dfedcb" />
      <path d="M1400 1410 l40 10 l-30 24 l-22 -12z M1140 1412 l60 12 l-30 20z" fill="#eef2e6" />
      <path d="M1585 1400 q-6 30 -12 60" stroke="#b5e0f2" stroke-width="3" fill="none" />
      <path d="M1296 1436 q14 20 34 20 l30 3" stroke="#c9b4d3" stroke-width="3" fill="none" />

      <g class="sans" font-size="18" fill="#333" stroke="#fff" stroke-width="3" paint-order="stroke" letter-spacing="2">
        <text x="1691" y="602" text-anchor="end">Georgetown</text>
        <text x="1697" y="645">Paramaribo</text>
        <text x="773" y="1429">Lima</text>
      </g>
      <g fill="#fff" stroke="#777" stroke-width="2">
        <circle cx="1725" cy="657" r="5" />
        <circle cx="774" cy="1442" r="5" />
      </g>
      <g class="serif" font-size="18" fill="#444" letter-spacing="4">
        <text x="1764" y="737" text-anchor="end">SURINAME</text>
        <text x="1782" y="751">FRENCH</text>
        <text x="1780" y="775">GUIANA</text>
      </g>
      <g class="sans" font-style="italic" font-size="18" fill="#777" stroke="#fff" stroke-width="2" paint-order="stroke">
        <text x="1447" y="1426" letter-spacing="12">MATO GROSSO</text>
        <text x="1502" y="1456" letter-spacing="12">PLATEAU</text>
      </g>
      <g class="sans" font-style="italic" font-size="18" fill="#5b96a8">
        <text transform="translate(1302 1432) rotate(20)">Guapore</text>
        <text transform="translate(1638 1298) rotate(36)">Teles Pires</text>
      </g>
      <path d="M1740 1418 l4 -3 h10 l4 5 h16 v26 h-6 v-5 h-6 v5 h-6 v-5 h-5 v5 h-5 v-5 h-5 v5 h-1 v-28z" fill="#fff" stroke="#666" stroke-width="2" />
      <path d="M1746 1428 h22 M1746 1435 h22" stroke="#555" stroke-width="2" />
    </svg>`;
  }
  private status() {
    return html`<footer class="status">
      <div class="scale">
        <select aria-label="Map scale"><option>1:16,879,327</option></select>
        ${icon(8, 8, svg`<path d="M0 1 H8 L4 7 Z" fill="#333"/>`)}
      </div>
      <span class="bar"></span>
      <button class="tool on" aria-label="Snapping">${icon(28, 28, svg`
        <path d="M2 2 H20 V10 M2 2 V20 H11 V2 M2 11 H20" stroke="#7d8b98" stroke-width="2"/>
        <path d="M20 13 V26 M13 20 H27" stroke="#4a6070" stroke-width="2"/>`)}</button>
      <button class="tool" aria-label="Grid">${icon(24, 26, svg`
        <path d="M1 1 H23 V25 H1 Z M1 7 H23 M1 13 H23 M1 19 H23 M7 1 V25 M13 1 V25 M18 1 V25" stroke="#a8a8a8" stroke-width="2"/>`)}</button>
      <button class="tool" aria-label="Dynamic constraints">${icon(28, 28, svg`
        <path d="M14 14 L26 26 H4 Z" fill="#d3e9f8"/>
        <rect x="1" y="4" width="7" height="4" stroke="#5f5f5f" stroke-width="2"/>
        <path d="M18 6 H28 M23 1 V11" stroke="#5f5f5f" stroke-width="2"/>
        <path d="M5 19 L14 6 M5 14 V19 H10 M14 10 V5 H10" stroke="#56a5d8" stroke-width="2"/>
        <path d="M5 26 H27" stroke="#56a5d8" stroke-width="2"/>
        <rect x="1" y="23" width="5" height="5" fill="#5b9a5b"/>
        <rect x="20" y="17" width="7" height="5" stroke="#5f5f5f" stroke-width="2" fill="#fff"/>`)}</button>
      <button class="tool" aria-label="Inference">${icon(28, 28, svg`
        <rect x="1" y="0" width="13" height="14" fill="#daedda"/>
        <path d="M14 0 V28 M0 14 H28" stroke="#6e6e6e" stroke-width="2" stroke-dasharray="4 2"/>
        <rect x="11" y="11" width="6" height="6" fill="#5f5f5f"/>`)}</button>
      <button class="tool" aria-label="Ground to grid correction">${icon(28, 28, svg`
        <path d="M2 19 V8 L9 18 V7" stroke="#56a5d8" stroke-width="3"/>
        <path d="M14 0 V28 L27 15" stroke="#6e6e6e" stroke-width="2"/>
        <path d="M16 4 C22 4 24 7 24 12 M20 9 L24 14 L28 9" stroke="#56a5d8" stroke-width="2"/>`)}</button>
      <button class="tool more" aria-label="More">${chevron("down", 16, "#1a1a1a", 2)}</button>
      <span class="bar"></span>
      <div class="coords"><span>46.3772624°W 15.1347551°N</span><button aria-label="Coordinate format">${chevron("down", 18, "#5a5a5a", 3)}</button></div>
      <span class="bar"></span>
      <button class="selected">
        ${icon(30, 30, svg`
          <path d="M12 3 H28 V20 H12 Z" fill="#f4f4f4" stroke="#c0c0c0" stroke-width="2"/>
          <path d="M13 4 H18 L22 12 L18 19 H13 Z" fill="#cdeafa"/><path d="M18 4 L22 12 L28 7 M22 12 L20 19" stroke="#b5b5b5" stroke-width="2"/>
          <path d="M16 23 L22 29" stroke="#e0c3a3" stroke-width="4"/>
          <circle cx="10" cy="17" r="8" fill="#fff" stroke="#a6d1ee" stroke-width="2"/><path d="M5 17 H15 M10 12 V22" stroke="#999" stroke-width="2"/>`)}
        Selected Features: 0
      </button>
      <span class="bar"></span>
      <button class="tool" aria-label="Selection chart">${icon(22, 24, svg`
        <rect x="1" y="1" width="20" height="21" rx="1" stroke="#b5b5b5" stroke-width="2"/>
        <path d="M4 1 L10 11 L21 5 M10 11 L8 22" stroke="#b5b5b5" stroke-width="2"/>`)}</button>
      <span class="bar"></span>
      <button class="tool" aria-label="Pause drawing">${icon(20, 26, svg`<path d="M4 0 V26 M16 0 V26" stroke="#5f5f5f" stroke-width="7"/>`)}</button>
      <span class="bar"></span>
      <button class="refresh" aria-label="Refresh">${icon(28, 30, svg`
        <path d="M3 12 C5 3 17 1 22 8" stroke="#56a5d8" stroke-width="5"/><path d="M28 1 V13 H16 Z" fill="#56a5d8"/>
        <path d="M25 18 C23 27 11 29 6 22" stroke="#56a5d8" stroke-width="5"/><path d="M0 29 V17 H12 Z" fill="#56a5d8"/>`)}</button>
    </footer>`;
  }
}

/* ---------- catalog pane ---------- */

type Kind = "folder" | "polygon" | "line" | "xlsx" | "raster";
interface Node {
  name: string;
  depth: number;
  kind: Kind;
  open?: boolean;
}

const leaf = (name: string, kind: Kind): Node => ({ name, depth: 3, kind });
const tree: Node[] = [
  { name: "POT", depth: 0, kind: "folder", open: true },
  { name: "Anexo_Acuerdo_012_2013", depth: 1, kind: "folder", open: true },
  { name: "gdb", depth: 2, kind: "folder", open: false },
  { name: "shp", depth: 2, kind: "folder", open: true },
  leaf("BARRIOS.shp", "polygon"),
  leaf("COMUNAS.shp", "polygon"),
  leaf("EXP_URBANA_AJUSTADA_PREDIO...", "polygon"),
  leaf("HIDROGRAFIA.shp", "line"),
  leaf("MOT.shp", "polygon"),
  leaf("ORDEN_VIAL.shp", "line"),
  leaf("RIO_BOGOTA.shp", "line"),
  leaf("VEREDA.shp", "polygon"),
  leaf("VIAS.shp", "line"),
  leaf("VIAS_PERIMETRO.shp", "line"),
  leaf("VIAS_PERIMETRO_URBANO.shp", "line"),
  leaf("VIAS_RURALES.shp", "line"),
  leaf("VIAS_URBANAS.shp", "line"),
  leaf("ZONA_URBANA_AJUSTADA_PREDI...", "polygon"),
  { name: "POTGeoTable.xlsx", depth: 2, kind: "xlsx", open: false },
  ...["CG-01", "CG-02", "CG-03", "CG-04", "CG-05", "CG-06", "CG-07", "CG-08", "CR-01", "CR-02A", "CR-02B", "CR-03", "CU-01", "CU-02"].map(
    (n): Node => ({ name: `${n}.jpg`, depth: 2, kind: "raster", open: false })
  ),
];
const kindIcon: Record<Kind, TemplateResult> = { folder, polygon: polygonShp, line: lineShp, xlsx, raster };

@customElement("catalog-pane")
class CatalogPane extends LitElement {
  @state() private selected = "BARRIOS.shp";
  static styles = [
    shared,
    css`
      :host {
        display: flex;
        flex-direction: column;
        min-height: 0;
        background: #f7f9f8;
        border: 2px solid #0079c1;
        border-radius: 6px 6px 0 0;
      }
      .tabs {
        display: flex;
        align-items: center;
        gap: 19px;
        padding: 4px 12px 0 9px;
        font-size: 21px;
      }
      .tabs button {
        height: 40px;
        border-bottom: 4px solid transparent;
      }
      .tabs .on {
        font-weight: 600;
        border-color: #0079c1;
      }
      .tabs .menu {
        margin-left: auto;
      }
      .nav {
        display: flex;
        align-items: center;
        padding: 14px 8px 0 7px;
      }
      .home {
        width: 35px;
        height: 42px;
        margin-left: 8px;
        border: 2px solid #dcdcdc;
        border-right: 0;
      }
      .search {
        flex: 1;
        display: flex;
        align-items: center;
        height: 42px;
        border: 2px solid #949494;
        background: #fff;
      }
      .filter {
        width: 39px;
        height: 38px;
        border-right: 2px solid #949494;
      }
      .search input {
        flex: 1;
        padding: 2px 0 0 9px;
      }
      .more {
        width: 36px;
        margin-left: 10px;
      }
      .body {
        flex: 1;
        min-height: 0;
        display: flex;
        margin: 9px 8px 0 0;
      }
      .tree {
        flex: 1;
        min-width: 0;
        overflow: hidden;
        padding: 3px 2px 0 0;
      }
      .node {
        display: flex;
        align-items: center;
        height: 42px;
      }
      .twist {
        width: 28px;
        height: 28px;
      }
      .twist.closed {
        padding-left: 6px;
      }
      .item {
        flex: 1;
        min-width: 0;
        justify-content: flex-start;
        height: 42px;
        gap: 14px;
        padding-left: 5px;
        border: 2px solid transparent;
        white-space: nowrap;
      }
      .item.on {
        background: #c5daed;
        border-color: #0079c1;
      }
      .gutter {
        width: 30px;
        background: #ebebeb;
        display: flex;
        flex-direction: column;
        align-items: center;
        padding: 9px 0 8px;
      }
      .thumb {
        width: 16px;
        height: 37px;
        margin: 13px 0 auto;
        border-radius: 8px;
        background: #b2b2b2;
      }
    `,
  ];
  render() {
    return html`
      <pane-header heading="Catalog" active></pane-header>
      <div class="tabs">
        <button class="on">Project</button><button>Portal</button><button>Computer</button><button>Favorites</button>
        <button class="menu" aria-label="Menu">${menuBars}</button>
      </div>
      <div class="nav">
        <button aria-label="Back">${back}</button>
        <button class="home" aria-label="Home">${home}</button>
        <div class="search">
          <button class="filter" aria-label="Filter">${funnelLine}</button>
          <input aria-label="Search project" placeholder="Search Project" />
          <button aria-label="Search">${searchGlass}</button>
          <button class="more" aria-label="Search options">${chevron("down")}</button>
        </div>
      </div>
      <div class="body">
        <ul class="tree" role="tree">
          ${tree.map(
            (n) => html`<li class="node" role="treeitem" style=${styleMap({ paddingLeft: `${123 + n.depth * 28}px` })}>
              ${n.open === undefined
                ? html`<span class="twist"></span>`
                : html`<button class=${classMap({ twist: true, closed: !n.open })} aria-label="Expand ${n.name}">${n.open ? openArrow : closedArrow}</button>`}
              <button class=${classMap({ item: true, on: n.name === this.selected })} @click=${() => (this.selected = n.name)}>
                ${kindIcon[n.kind]}${n.name}
              </button>
            </li>`
          )}
        </ul>
        <div class="gutter">${chevron("up")}<span class="thumb"></span>${chevron("down")}</div>
      </div>
    `;
  }
}

/* ---------- shapefile properties dialog ---------- */

type Row = [string, string];
const dataSource: Row[] = [
  ["Data Type", "Shapefile Feature Class"],
  ["Shapefile", "C:\\R.SIGE\\file\\data\\POT\\Anexo_Acuerdo_012_2013\\shp\\BARRIOS.shp"],
  ["Geometry Type", "Polygon"],
  ["Coordinates have Z value", "No"],
  ["Coordinates have M value", "No"],
];
const extent: Row[] = [
  ["Top", "1,049,014.279907"],
  ["Bottom", "1,045,711.493713"],
  ["Left", "1,007,244.523926"],
  ["Right", "1,010,930.528931"],
];
const projected: Row[] = [
  ["Projected Coordinate System", "MAGNA Colombia Bogota"],
  ["Projection", "Transverse Mercator"],
  ["WKID", "3116"],
  ["Authority", "EPSG"],
  ["Linear Unit", "Meters (1.0)"],
  ["False Easting", "1000000.0"],
  ["False Northing", "1000000.0"],
  ["Central Meridian", "-74.07750791666666"],
  ["Scale Factor", "1.0"],
  ["Latitude Of Origin", "4.596200416666666"],
];
const geographic: Row[] = [
  ["Geographic Coordinate System", "MAGNA"],
  ["WKID", "4686"],
  ["Authority", "EPSG"],
  ["Angular Unit", "Degree (0.0174532925199433)"],
  ["Prime Meridian", "Greenwich (0.0)"],
  ["Datum", "D MAGNA"],
  ["Spheroid", "GRS 1980"],
  ["Semimajor Axis", "6378137.0"],
  ["Semiminor Axis", "6356752.314140356"],
  ["Inverse Flattening", "298.257222101"],
];
const domain: Row[] = [
  ["Min Y", "-9,510,300.00 Meters"],
  ["Max Y", "10,493,900.00 Meters"],
];

@customElement("properties-dialog")
class PropertiesDialog extends LitElement {
  @state() private page = "Source";
  static styles = [
    shared,
    css`
      :host {
        display: flex;
        flex-direction: column;
        background: #f7f9f8;
        border: 2px solid #d0d2d6;
        border-radius: 18px;
        box-shadow: 0 2px 6px rgba(0, 0, 0, 0.08);
        padding: 0 16px 18px 18px;
      }
      .head {
        display: flex;
        align-items: center;
        height: 52px;
        gap: 57px;
        padding-right: 12px;
        margin-left: -4px;
        color: #707070;
      }
      .title {
        flex: 1;
        padding-top: 2px;
        font-size: 26px;
        line-height: 36px;
      }
      .head button {
        width: 20px;
        height: 20px;
      }
      .main {
        flex: 1;
        min-height: 0;
        display: flex;
        gap: 18px;
      }
      .pages {
        width: 280px;
        border: 2px solid #c8c8c8;
        background: #fff;
        font-size: 19px;
      }
      .pages button {
        width: 280px;
        height: 42px;
        margin-left: -2px;
        padding: 2px 0 0 18px;
        justify-content: flex-start;
      }
      .pages .on {
        height: 38px;
        margin-top: -2px;
        background: #c5daed;
        font-weight: 700;
      }
      .panel {
        flex: 1;
        min-width: 0;
        display: flex;
        border: 2px solid #c8c8c8;
        background: #fff;
      }
      .content {
        flex: 1;
        min-width: 0;
        overflow: hidden;
        padding: 15px 11px 0 20px;
      }
      .section {
        display: flex;
        align-items: center;
        gap: 8px;
        height: 36px;
        margin: 4px 0 11px;
        font-size: 21px;
        font-weight: 600;
      }
      .section.blue {
        color: #0079c1;
      }
      .sub {
        padding-top: 4px;
        margin: 0 0 8px 22px;
        color: #1a1a1a;
      }
      .line {
        display: flex;
        align-items: flex-start;
        gap: 9px;
        padding-left: 25px;
      }
      .line.deep {
        padding-left: 37px;
      }
      .line + .line {
        margin-top: 10px;
      }
      .shell {
        flex: 1;
        border: solid #c8c8c8;
        border-width: 0 1px 2px 0;
      }
      table {
        width: 100%;
        border-collapse: collapse;
        font-size: 18px;
        line-height: 24px;
      }
      tr {
        height: 38px;
      }
      tr:nth-child(even) {
        background: #ebebeb;
      }
      td,
      th {
        border: 2px solid #c8c8c8;
        padding: 2px 6px 0;
        text-align: left;
        font-weight: 400;
        white-space: nowrap;
      }
      td {
        width: 100%;
        padding-left: 10px;
      }
      .roomy th {
        padding-right: 30px;
      }
      .deep tr {
        height: 45px;
      }
      .deep th {
        padding: 6px 18px 0 6px;
      }
      .deep .num {
        width: auto;
        padding: 6px 13px 0 14px;
        font-size: 17px;
        color: #1a1a1a;
      }
      .deep .unit {
        padding-bottom: 3px;
      }
      .copy {
        width: 42px;
        height: 42px;
        border: 2px solid #444;
        background: #fff;
      }
      .action {
        height: 42px;
        padding-top: 2px;
        border: 2px solid #444;
        background: #fff;
        color: #3a3a3a;
      }
      .recalc {
        display: flex;
        width: 143px;
        margin: 20px 51px 12px auto;
      }
      .gutter {
        width: 30px;
        display: flex;
        flex-direction: column;
        align-items: center;
        padding: 8px 0;
        background: #ebebeb;
      }
      .thumb {
        width: 16px;
        flex: 1;
        margin: 12px 0 180px;
        border-radius: 8px;
        background: #b2b2b2;
      }
      .foot {
        display: flex;
        justify-content: flex-end;
        gap: 18px;
        padding-top: 26px;
      }
      .foot .action {
        width: 122px;
      }
      u {
        text-underline-offset: 4px;
      }
    `,
  ];
  private table(rows: Row[], extra = "") {
    return html`<div class="line ${extra}">
      <div class="shell">
        <table>
          <tbody>
            ${rows.map(([k, v]) => html`<tr><th scope="row">${k}</th><td>${v}</td></tr>`)}
          </tbody>
        </table>
      </div>
      <button class="copy" aria-label="Copy">${copyIcon}</button>
    </div>`;
  }
  private section(name: string, blue = false) {
    return html`<h3 class=${classMap({ section: true, blue })}>${chevron("down", 14, blue ? "#0079c1" : "#6a6a6a", 3)}${name}</h3>`;
  }
  render() {
    return html`
      <div class="head">
        <h2 class="title">Shapefile Properties: BARRIOS.shp</h2>
        <button aria-label="Maximize">${icon(20, 20, svg`<rect x="2" y="1" width="16" height="17" stroke="#666" stroke-width="2"/>`)}</button>
        <button aria-label="Close">${cross(20, "#666")}</button>
      </div>
      <div class="main">
        <nav class="pages">
          ${["Source", "Indexes"].map(
            (p) => html`<button class=${classMap({ on: p === this.page })} @click=${() => (this.page = p)}>${p}</button>`
          )}
        </nav>
        <div class="panel">
          <div class="content">
            ${this.section("Data Source", true)} ${this.table(dataSource)} ${this.section("Extent")}
            <p class="sub">XY Extent</p>
            <div class="line deep">
              <div class="shell">
                <table>
                  <tbody>
                    ${extent.map(
                      ([k, v]) => html`<tr><th scope="row">${k}</th><td class="num">${v}</td><td class="unit">m</td></tr>`
                    )}
                  </tbody>
                </table>
              </div>
              <button class="copy" aria-label="Copy">${copyIcon}</button>
            </div>
            <button class="action recalc">Recalculate</button>
            ${this.section("Spatial Reference")} ${this.table(projected)} ${this.table(geographic)}
            ${this.section("Domain, Resolution and Tolerance")} ${this.table(domain, "roomy")}
          </div>
          <div class="gutter">${chevron("up", 14, "#6a6a6a")}<span class="thumb"></span>${chevron("down", 14, "#6a6a6a")}</div>
        </div>
      </div>
      <div class="foot">
        <button class="action"><span><u>O</u>K</span></button>
        <button class="action">Cancel</button>
      </div>
    `;
  }
}

/* ---------- application window ---------- */

@customElement("app-root")
class AppRoot extends LitElement {
  static styles = [
    shared,
    css`
      :host {
        display: block;
      }
      .window {
        position: relative;
        display: flex;
        flex-direction: column;
        height: 100vh;
        overflow: hidden;
        background: #ebebeb;
        border-bottom: 2px solid #bdbdbd;
      }
      .workspace {
        flex: 1;
        min-height: 0;
        display: grid;
        grid-template-columns: 560px minmax(0, 1fr) 680px;
        gap: 11px;
        padding: 0 10px 10px 9px;
      }
      .docked {
        margin-top: 11px;
      }
      .dialog {
        position: absolute;
        inset: 25px 824px 99px 478px;
      }
    `,
  ];
  render() {
    return html`
      <div class="window">
        <app-ribbon></app-ribbon>
        <div class="workspace">
          <contents-pane class="docked"></contents-pane>
          <map-view></map-view>
          <catalog-pane class="docked"></catalog-pane>
        </div>
        <properties-dialog class="dialog" role="dialog" aria-label="Shapefile Properties"></properties-dialog>
      </div>
    `;
  }
}
